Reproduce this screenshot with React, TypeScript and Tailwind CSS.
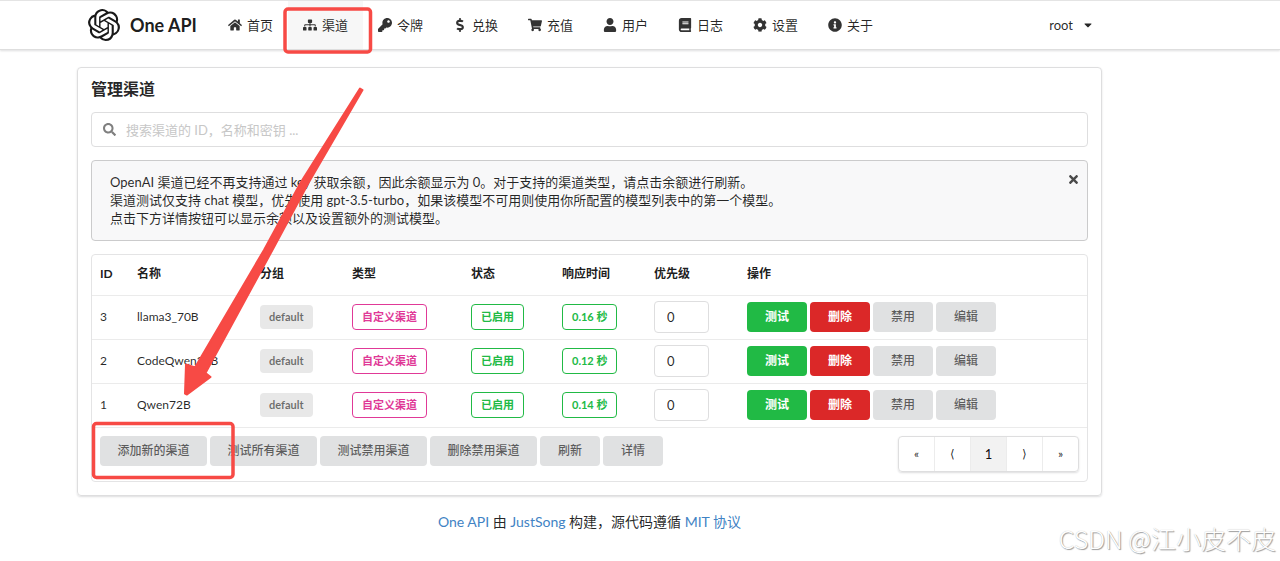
import type { ReactNode } from "react";
import { clsx } from "clsx";
import {
  FaBook,
  FaCaretDown,
  FaCog,
  FaDollarSign,
  FaHome,
  FaInfoCircle,
  FaKey,
  FaSearch,
  FaShoppingCart,
  FaSitemap,
  FaTimes,
  FaUser,
} from "react-icons/fa";
import { SiOpenai } from "react-icons/si";

const navItems = [
  { label: "首页", icon: FaHome },
  { label: "渠道", icon: FaSitemap, active: true },
  { label: "令牌", icon: FaKey },
  { label: "兑换", icon: FaDollarSign },
  { label: "充值", icon: FaShoppingCart },
  { label: "用户", icon: FaUser },
  { label: "日志", icon: FaBook },
  { label: "设置", icon: FaCog },
  { label: "关于", icon: FaInfoCircle },
];

const channels = [
  { id: 3, name: "llama3_70B", time: "0.16 秒" },
  { id: 2, name: "CodeQwen27B", time: "0.12 秒" },
  { id: 1, name: "Qwen72B", time: "0.14 秒" },
];

const columns = [
  { title: "ID", width: "w-[37px]" },
  { title: "名称", width: "w-[123px]" },
  { title: "分组", width: "w-[92px]" },
  { title: "类型", width: "w-[119px]" },
  { title: "状态", width: "w-[91px]" },
  { title: "响应时间", width: "w-[92px]" },
  { title: "优先级", width: "w-[93px]" },
  { title: "操作", width: "" },
];

const wideActions = ["添加新的渠道", "测试所有渠道", "测试禁用渠道", "删除禁用渠道"];
const pages = ["«", "⟨", "1", "⟩", "»"];

interface ButtonProps {
  children: ReactNode;
  tone?: "grey" | "green" | "red";
  wide?: boolean;
}

function Button({ children, tone = "grey", wide }: ButtonProps) {
  return (
    <button
      type="button"
      className={clsx(
        "h-[30px] rounded-[4px] text-xs",
        wide ? "w-[107px]" : "w-[60px]",
        tone === "grey" && "bg-[#e0e1e2] font-medium text-black/60",
        tone === "green" && "bg-[#21ba45] font-bold text-white",
        tone === "red" && "bg-[#db2828] font-bold text-white"
      )}
    >
      {children}
    </button>
  );
}

interface LabelProps {
  children: ReactNode;
  tone: "grey" | "pink" | "green";
}

function Label({ children, tone }: LabelProps) {
  return (
    <span
      className={clsx(
        "inline-flex items-center rounded-[4px] px-[9px] align-middle text-[11px] font-bold",
        tone === "grey" && "h-6 bg-[#e8e8e8] text-black/55",
        tone === "pink" && "h-[26px] border border-[#e03997] text-[#e03997]",
        tone === "green" && "h-[26px] border border-[#21ba45] text-[#21ba45]"
      )}
    >
      {children}
    </span>
  );
}

function Header() {
  return (
    <header className="border-y border-t-[#e4e4e4] border-b-[#dedede] pr-[101px] shadow-[0_1px_2px_rgba(34,36,38,0.15)]">
      <nav className="mx-auto flex h-12 max-w-[1025px] items-stretch pl-[11px]">
        <a href="#" className="flex w-[125px] shrink-0 items-center gap-[10px] text-black/90">
          <SiOpenai className="size-8" />
          <span className="text-lg font-bold">One API</span>
        </a>
        {navItems.map(({ label, icon: Icon, active }) => (
          <a
            key={label}
            href="#"
            className={clsx(
              "flex w-[75px] shrink-0 items-center justify-center gap-[5px]",
              active && "bg-black/[0.03]"
            )}
          >
            <Icon className="size-[14px] text-black/80" />
            {label}
          </a>
        ))}
        <button type="button" className="ml-auto flex items-center gap-[9px] pr-2">
          root
          <FaCaretDown className="size-3" />
        </button>
      </nav>
    </header>
  );
}

function ChannelTable() {
  return (
    <div className="rounded-[4px] border border-[#e4e4e5]">
      <table className="w-full table-fixed text-left text-xs">
        <thead>
          <tr className="h-10 border-b border-[#ebebeb]">
            {columns.map((column) => (
              <th key={column.title} className={clsx("px-2 pb-[2px] font-bold text-black/90", column.width)}>
                {column.title}
              </th>
            ))}
          </tr>
        </thead>
        <tbody>
          {channels.map((channel) => (
            <tr key={channel.id} className="h-11 border-b border-[#ebebeb]">
              <td className="px-2">{channel.id}</td>
              <td className="px-2">{channel.name}</td>
              <td className="px-2">
                <Label tone="grey">default</Label>
              </td>
              <td className="px-2">
                <Label tone="pink">自定义渠道</Label>
              </td>
              <td className="px-2">
                <Label tone="green">已启用</Label>
              </td>
              <td className="px-2">
                <Label tone="green">{channel.time}</Label>
              </td>
              <td className="px-2">
                <input
                  type="text"
                  defaultValue="0"
                  aria-label="优先级"
                  className="block h-8 w-[55px] rounded-[4px] border border-[#dededf] px-3 text-[13px] outline-none"
                />
              </td>
              <td className="px-2">
                <div className="flex gap-[3px]">
                  <Button tone="green">测试</Button>
                  <Button tone="red">删除</Button>
                  <Button>禁用</Button>
                  <Button>编辑</Button>
                </div>
              </td>
            </tr>
          ))}
        </tbody>
      </table>
      <div className="flex items-start justify-between px-2 pt-2 pb-[9px]">
        <div className="flex gap-[3px]">
          {wideActions.map((action) => (
            <Button key={action} wide>
              {action}
            </Button>
          ))}
          <Button>刷新</Button>
          <Button>详情</Button>
        </div>
        <div className="flex rounded-[4px] border border-[#dededf] shadow-[0_1px_2px_rgba(34,36,38,0.15)]">
          {pages.map((page) => (
            <button
              key={page}
              type="button"
              className={clsx(
                "h-[34px] w-9 border-r border-[#ececec] last:w-[35px] last:border-r-0",
                page === "1" ? "bg-[#f2f2f2] text-black/95" : "text-xs"
              )}
            >
              {page}
            </button>
          ))}
        </div>
      </div>
    </div>
  );
}

function Annotations() {
  return (
    <svg
      className="pointer-events-none absolute top-0 left-0"
      width="400"
      height="500"
      viewBox="0 0 400 500"
      fill="none"
      aria-hidden="true"
    >
      <rect x="285" y="9" width="85.5" height="43" rx="3" stroke="#f74a45" strokeWidth="3.5" />
      <rect x="93.5" y="423.5" width="139.5" height="54" rx="3" stroke="#f74a45" strokeWidth="3.5" />
      <path
        d="M360 88.5L362.5 90L309 182L273 249L205.5 373L210.5 377L187 394.5L185 393.5L186 364.5L195 367.5L264 250L301 182Z"
        fill="#f74a45"
        stroke="#f74a45"
        strokeWidth="2"
        strokeLinejoin="round"
      />
    </svg>
  );
}

export default function App() {
  return (
    <div className="relative min-h-screen bg-white font-[Lato,'Noto_Sans_CJK_SC',sans-serif] text-[13px] leading-[18px] text-black/85">
      <Header />
      <div className="pr-[101px]">
        <main className="mx-auto mt-[17px] max-w-[1025px] rounded-[4px] border border-[#dededf] p-[13px] pt-3 shadow-[0_1px_2px_rgba(34,36,38,0.15)]">
          <h1 className="mb-[14px] text-base leading-[18px] font-bold">管理渠道</h1>
          <label className="mb-[13px] flex h-[35px] items-center gap-[10px] rounded-[4px] border border-[#dededf] px-[11px]">
            <FaSearch className="size-[13px] text-black/50" />
            <input
              type="text"
              aria-label="搜索渠道"
              placeholder="搜索渠道的 ID，名称和密钥 ..."
              className="min-w-0 flex-1 outline-none placeholder:text-[#c7c7c7]"
            />
          </label>
          <section className="mb-[13px] flex items-start justify-between rounded-[4px] border border-[#cbcbcc] bg-[#f8f8f9] py-3 pr-[7px] pl-[18px]">
            <p className="pb-[1px]">
              OpenAI 渠道已经不再支持通过 key 获取余额，因此余额显示为 0。对于支持的渠道类型，请点击余额进行刷新。
              <br />
              渠道测试仅支持 chat 模型，优先使用 gpt-3.5-turbo，如果该模型不可用则使用你所配置的模型列表中的第一个模型。
              <br />
              点击下方详情按钮可以显示余额以及设置额外的测试模型。
            </p>
            <button type="button" aria-label="关闭" className="text-black/70">
              <FaTimes className="size-[13px]" />
            </button>
          </section>
          <ChannelTable />
        </main>
        <footer className="mt-4 text-center text-sm">
          <a href="#" className="text-[#4183c4]">One API</a> 由{" "}
          <a href="#" className="text-[#4183c4]">JustSong</a> 构建，源代码遵循{" "}
          <a href="#" className="text-[#4183c4]">MIT 协议</a>
        </footer>
      </div>
      <Annotations />
      <div className="absolute right-1 bottom-[11px] font-['Noto_Sans_CJK_SC',sans-serif] text-[25px] leading-6 font-light text-white [text-shadow:1px_1px_1px_#999,0_0_1px_#bbb]">
        CSDN @江小皮不皮
      </div>
    </div>
  );
}
